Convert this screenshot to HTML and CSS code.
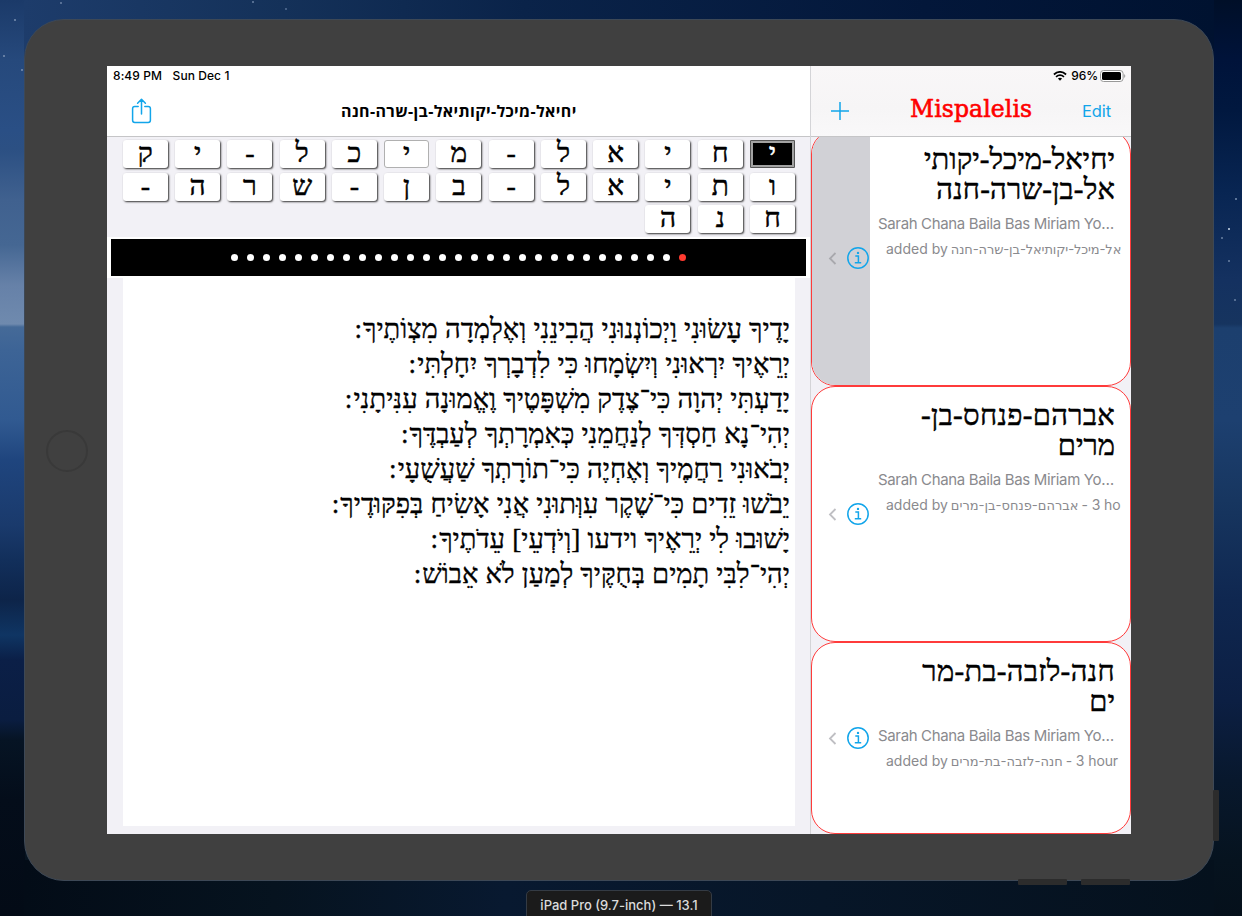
FILE: index.html
```html
<!DOCTYPE html>
<html lang="en">
<head>
<meta charset="utf-8">
<title>Mispalelis</title>
<link rel="stylesheet" href="styles.css">
</head>
<body>
<div class="desktop">
  <div class="device">
    <span class="home"></span>
    <span class="side-button power"></span>
    <span class="side-button vol-a"></span>
    <span class="side-button vol-b"></span>
    <div class="screen">
      <main class="detail">
        <header class="detail-head">
          <div class="status"><span>8:49 PM</span><span>Sun Dec 1</span></div>
          <div class="navbar">
            <svg class="share" viewBox="0 0 22 26" fill="none" stroke="#12a5ea" stroke-width="1.5" stroke-linecap="round" stroke-linejoin="round"><path d="M7.2 8.4H3.8Q1.6 8.4 1.6 10.6V22.3Q1.6 24.5 3.8 24.5H17.2Q19.4 24.5 19.4 22.3V10.6Q19.4 8.4 17.2 8.4H13.8M10.5 16V1.6M6.6 5.2L10.5 1.3L14.4 5.2"/></svg>
            <h1 class="name" dir="rtl">יחיאל-מיכל-יקותיאל-בן-שרה-חנה</h1>
          </div>
        </header>
        <section class="keys" dir="rtl">
          <b class="on">י</b><b>ח</b><b>י</b><b>א</b><b>ל</b><b>-</b><b>מ</b><b class="flat">י</b><b>כ</b><b>ל</b><b>-</b><b>י</b><b>ק</b>
          <b>ו</b><b>ת</b><b>י</b><b>א</b><b>ל</b><b>-</b><b>ב</b><b>ן</b><b>-</b><b>ש</b><b>ר</b><b>ה</b><b>-</b>
          <b>ח</b><b>נ</b><b>ה</b>
        </section>
        <div class="pager-wrap"><div class="pager">
          <i></i><i></i><i></i><i></i><i></i><i></i><i></i><i></i><i></i><i></i><i></i><i></i><i></i><i></i><i></i><i></i><i></i><i></i><i></i><i></i><i></i><i></i><i></i><i></i><i></i><i></i><i></i><i></i><i class="current"></i>
        </div></div>
        <section class="verses" dir="rtl">
          <p>יָדֶיךָ עָשׂוּנִי וַיְכוֹנְנוּנִי הֲבִינֵנִי וְאֶלְמְדָה מִצְוֹתֶיךָ<span>:</span></p>
          <p>יְרֵאֶיךָ יִרְאוּנִי וְיִשְׂמָחוּ כִּי לִדְבָרְךָ יִחָלְתִּי<span>:</span></p>
          <p>יָדַעְתִּי יְהוָה כִּי־צֶדֶק מִשְׁפָּטֶיךָ וֶאֱמוּנָה עִנִּיתָנִי<span>:</span></p>
          <p>יְהִי־נָא חַסְדְּךָ לְנַחֲמֵנִי כְּאִמְרָתְךָ לְעַבְדֶּךָ<span>:</span></p>
          <p>יְבֹאוּנִי רַחֲמֶיךָ וְאֶחְיֶה כִּי־תוֹרָתְךָ שַׁעֲשֻׁעָי<span>:</span></p>
          <p>יֵבֹשׁוּ זֵדִים כִּי־שֶׁקֶר עִוְּתוּנִי אֲנִי אָשִׂיחַ בְּפִקּוּדֶיךָ<span>:</span></p>
          <p>יָשׁוּבוּ לִי יְרֵאֶיךָ וידעו [וְיֹדְעֵי] עֵדֹתֶיךָ<span>:</span></p>
          <p>יְהִי־לִבִּי תָמִים בְּחֻקֶּיךָ לְמַעַן לֹא אֵבוֹשׁ<span>:</span></p>
        </section>
      </main>
      <aside class="master">
        <header class="master-head">
          <div class="status right">
            <svg class="wifi" viewBox="0 0 14 10"><path d="M.9 3.5Q7-1.8 13.1 3.5M3 5.8Q7 2.4 11 5.8" fill="none" stroke="#000" stroke-width="1.7"/><path d="M4.9 7.6Q7 6 9.1 7.6L7 9.8Z"/></svg>
            <span class="pct">96%</span>
            <svg class="battery" viewBox="0 0 26 12"><rect x=".5" y=".5" width="22.6" height="11" rx="3" fill="#fff" stroke="#999"/><rect x="2" y="2" width="19" height="8" rx="1.6"/><path d="M24.2 4Q26.4 6 24.2 8Z" fill="#999"/></svg>
          </div>
          <div class="navbar">
            <svg class="plus" viewBox="0 0 18 18" stroke="#12a5ea" stroke-width="1.5"><path d="M9 0V18M0 9H18"/></svg>
            <h2 class="brand">Mispalelis</h2>
            <span class="edit">Edit</span>
          </div>
        </header>
        <div class="list">
          <article class="card selected">
            <div class="tools"><svg class="chev" viewBox="0 0 9 13"><path d="M7.5 1L2 6.5L7.5 12" fill="none" stroke="#a8a8ad" stroke-width="1.8"/></svg><svg class="info" viewBox="0 0 22 22"><circle cx="11" cy="11" r="10.2" fill="none" stroke="#12a5ea" stroke-width="1.5"/><path d="M8.3 9H11.4V15.7M7.8 15.8H14.2" fill="none" stroke="#12a5ea" stroke-width="1.5"/><circle cx="11" cy="5.9" r="1.2" fill="#12a5ea"/></svg></div>
            <div class="body">
              <h3 dir="rtl">יחיאל-מיכל-יקותי<br><span class="wide">אל-בן-שרה-חנה</span></h3>
              <p class="who">Sarah Chana Baila Bas Miriam Yo…</p>
              <p class="by"><span>added by</span><bdi class="tight" dir="rtl">אל-מיכל-יקותיאל-בן-שרה-חנה</bdi></p>
            </div>
          </article>
          <article class="card">
            <div class="tools"><svg class="chev" viewBox="0 0 9 13"><path d="M7.5 1L2 6.5L7.5 12" fill="none" stroke="#bfbfc3" stroke-width="1.8"/></svg><svg class="info" viewBox="0 0 22 22"><circle cx="11" cy="11" r="10.2" fill="none" stroke="#12a5ea" stroke-width="1.5"/><path d="M8.3 9H11.4V15.7M7.8 15.8H14.2" fill="none" stroke="#12a5ea" stroke-width="1.5"/><circle cx="11" cy="5.9" r="1.2" fill="#12a5ea"/></svg></div>
            <div class="body">
              <h3 dir="rtl"><span class="wider">אברהם-פנחס-בן-</span><br>מרים</h3>
              <p class="who">Sarah Chana Baila Bas Miriam Yo…</p>
              <p class="by"><span>added by</span><bdi dir="rtl">אברהם-פנחס-בן-מרים</bdi><span class="age">- 3 ho</span></p>
            </div>
          </article>
          <article class="card last">
            <div class="tools"><svg class="chev" viewBox="0 0 9 13"><path d="M7.5 1L2 6.5L7.5 12" fill="none" stroke="#bfbfc3" stroke-width="1.8"/></svg><svg class="info" viewBox="0 0 22 22"><circle cx="11" cy="11" r="10.2" fill="none" stroke="#12a5ea" stroke-width="1.5"/><path d="M8.3 9H11.4V15.7M7.8 15.8H14.2" fill="none" stroke="#12a5ea" stroke-width="1.5"/><circle cx="11" cy="5.9" r="1.2" fill="#12a5ea"/></svg></div>
            <div class="body">
              <h3 dir="rtl"><span class="wider">חנה-לזבה-בת-מר</span><br>ים</h3>
              <p class="who">Sarah Chana Baila Bas Miriam Yo…</p>
              <p class="by"><span>added by</span><bdi dir="rtl">חנה-לזבה-בת-מרים</bdi><span class="age">- 3 hour</span></p>
            </div>
          </article>
        </div>
      </aside>
    </div>
  </div>
  <footer class="caption"><span>iPad Pro (9.7-inch) — 13.1</span></footer>
</div>
</body>
</html>
```
FILE: styles.css
```css
* { box-sizing: border-box; margin: 0; padding: 0; }
body { width: 1242px; height: 916px; overflow: hidden; font-family: Inter, "DejaVu Sans", sans-serif; color: #000; }
.desktop {
  width: 1242px; height: 916px; overflow: hidden;
  padding: 19px 0 0 24px;
  display: flex; flex-direction: column; align-items: flex-start;
  background:
    radial-gradient(circle at 15px 20px, #7f95b5 0 .5px, transparent 1.2px),
    radial-gradient(circle at 4px 56px, #7f95b5 0 .5px, transparent 1.2px),
    radial-gradient(circle at 22px 70px, #7f95b5 0 .5px, transparent 1.2px),
    radial-gradient(circle at 61px 3px, #6f86a8 0 .5px, transparent 1.2px),
    radial-gradient(circle at 253px 2px, #6f86a8 0 .5px, transparent 1.2px),
    radial-gradient(circle at 286px 9px, #5a7398 0 .5px, transparent 1.2px),
    radial-gradient(circle at 1236px 199px, #7f95b5 0 .5px, transparent 1.2px),
    radial-gradient(circle at 1229px 229px, #9fb0c8 0 .7px, transparent 1.4px),
    radial-gradient(circle at 1222px 238px, #6f86a8 0 .5px, transparent 1.2px),
    radial-gradient(circle at 1229px 261px, #6f86a8 0 .5px, transparent 1.2px),
    radial-gradient(circle at 1235px 300px, #6f86a8 0 .5px, transparent 1.2px),
    linear-gradient(90deg, #1d3c6b, #143159 260px, #0a2349 500px, #03173a 900px, #001230) 24px 0 / 1190px 60px no-repeat,
    linear-gradient(90deg, #030c17, #06131f 250px, #081930 480px, #071628 800px, #05111d) 24px 860px / 1190px 56px no-repeat,
    linear-gradient(180deg, #1b3a69, #26497c 60px, #2a4f85 130px, #2c5083 150px, #40618f 200px, #456793 245px, #6681a8 285px, #6f8aae 324px, #456a98 327px, #3d6496 350px, #315a91 420px, #1f457e 460px, #1a3a6c 525px, #122f5b 560px, #0d2449 600px, #0f3563 635px, #0b1f47 660px, #0a1d40 720px, #061424 740px, #040d1a 800px, #030b16) 0 0 / 25px 916px no-repeat,
    linear-gradient(180deg, #000f28, #00133a 60px, #01183f 110px, #082552 190px, #143160 280px, #16345f 324px, #1c3f6e 328px, #1d4070 420px, #173660 500px, #0f2750 600px, #0c1f43 700px, #08182d 780px, #06131f 860px, #05101b);
}
.device {
  position: relative; flex: none;
  width: 1190px; height: 862px; border-radius: 40px;
  padding: 46px 0 0 82px;
  background: #404040; border: 1px solid #3d4856;
}
.home { position: absolute; left: 21px; top: 410px; width: 42px; height: 42px; border-radius: 50%; border: 2px solid #393939; }
.side-button { position: absolute; background: #2c2c2c; border-radius: 1px; }
.power { left: 1188px; top: 770px; width: 6px; height: 51px; }
.vol-a { left: 993px; top: 859px; width: 49px; height: 6px; }
.vol-b { left: 1056px; top: 859px; width: 49px; height: 6px; }
.screen { width: 1024px; height: 768px; display: flex; overflow: hidden; background: #f2f1f6; }
.detail { width: 704px; display: flex; flex-direction: column; border-right: 1px solid #d4d4d7; }
.detail-head, .master-head { height: 71px; flex: none; background: #fff; border-bottom: 1px solid #c5c5c7; }
.master-head { background: linear-gradient(#f9f7f8, #f6f5f6 60%, #f9f8f9); }
.status { height: 20px; display: flex; align-items: center; padding: 0 0 1px 6px; font-size: 12px; font-weight: 500; letter-spacing: .08px; gap: 10.5px; }
.status.right { justify-content: flex-end; padding: 0 5px 0 0; gap: 4px; letter-spacing: -.1px; }
.pct { margin: -1px -2px 0 0; }
.wifi { width: 14px; height: 10px; }
.battery { width: 26px; height: 12px; }
.navbar { height: 50px; display: flex; align-items: center; white-space: nowrap; }
.share { width: 22px; height: 26px; margin: 0 188px 0 24px; }
.name { font: bold 16px/20px "Open Sans", "DejaVu Sans", sans-serif; letter-spacing: .36px; }
.keys {
  height: 100px; flex: none; padding: 3px 15px 0 0;
  display: grid; grid-template-columns: repeat(13, 46px); grid-auto-rows: 28px;
  column-gap: 6.28px; row-gap: 4.6px; align-content: start;
}
.keys b {
  height: 28px; width: 45px; border-radius: 3px; background: #fff; box-shadow: 1px 1px 2px #333;
  font: 28px/25px "Liberation Serif", serif; text-align: center; -webkit-text-stroke: .5px currentColor;
}
.keys .on { background: #000; color: #fff; border: 3px solid #a2a2a2; outline: 1px solid #555; outline-offset: -1px; line-height: 19px; border-radius: 1px; box-shadow: none; }
.keys .flat { border: 1px solid #b0b0b0; box-shadow: none; line-height: 23px; }
.pager-wrap { height: 41px; padding: 2px 4px 2px 4px; background: #fff; flex: none; }
.pager { height: 37px; background: #000; display: flex; justify-content: center; align-items: center; gap: 9px; }
.pager i { width: 7px; height: 7px; border-radius: 50%; background: #fff; }
.pager .current { background: #ff3b30; }
.verses { margin: 0 15px 0 16px; height: 548px; padding: 34px 5px 0 0; background: #fff; font: 27.35px/35px "Liberation Serif", serif; word-spacing: .3px; -webkit-text-stroke: .35px #000; }
.verses p { height: 35px; white-space: nowrap; }
.verses span { margin-right: 1px; }
.master { width: 320px; display: flex; flex-direction: column; }
.plus { width: 18px; height: 18px; margin: 0 61px 0 20px; }
.brand { font: 23.5px/30px "DejaVu Serif", serif; letter-spacing: .1px; -webkit-text-stroke: .6px #f00; color: #f00; width: 122px; margin: -4px 50px 0 0; }
.edit { font-size: 16.5px; letter-spacing: -.1px; color: #12a5ea; }
.list { flex: 1; overflow: hidden; display: flex; flex-direction: column; }
.card { height: 256px; flex: none; display: flex; border: 1px solid #ff3b3b; border-radius: 24px; background: #fff; overflow: hidden; }
.card.selected { margin-top: -7px; }
.card.last { height: 192px; }
.tools { width: 58px; flex: none; display: flex; align-items: center; padding-left: 16px; gap: 10px; }
.selected .tools { background: #d1d1d6; }
.chev { width: 9px; height: 13px; flex: none; }
.info { width: 22px; height: 22px; flex: none; }
.body { flex: 1; min-width: 0; padding: 13px 0 0 8px; }
h3 { font: 29px/30px "Liberation Serif", serif; height: 60px; white-space: nowrap; padding-right: 15px; -webkit-text-stroke: .5px #000; }
.wide { letter-spacing: .2px; }
.wider { letter-spacing: .36px; }
.who { color: #8a8a8e; font-size: 15px; letter-spacing: -.35px; line-height: 20px; margin-top: 10px; white-space: nowrap; }
.by { color: #8a8a8e; font-size: 14px; line-height: 18px; margin: 6px 0 0 8px; white-space: nowrap; display: flex; gap: 3px; }
.by bdi { font-size: 13px; }
.by .tight { letter-spacing: -.12px; }
.age { letter-spacing: -.1px; }
.caption { margin: 9px 0 0 502px; width: 186px; height: 32px; flex: none; border: 1px solid #343b44; border-radius: 5px; background: #1b1b1b; color: #dcdcdc; font-size: 13px; font-weight: 500; line-height: 29px; text-align: center; white-space: nowrap; }
```
